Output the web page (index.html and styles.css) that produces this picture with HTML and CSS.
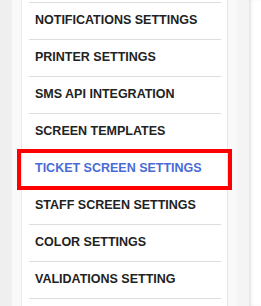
FILE: index.html
```html
<!DOCTYPE html>
<html>
<head>
<meta charset="utf-8">
<link rel="stylesheet" href="styles.css">
</head>
<body>
<div class="page">
  <div class="gutter"></div>
  <aside class="sidebar">
    <div class="card">
      <ul class="menu">
        <li class="item">NOTIFICATIONS SETTINGS</li>
        <li class="item">PRINTER SETTINGS</li>
        <li class="item">SMS API INTEGRATION</li>
        <li class="item">SCREEN TEMPLATES</li>
        <li class="item active">TICKET SCREEN SETTINGS<span class="highlight"></span></li>
        <li class="item">STAFF SCREEN SETTINGS</li>
        <li class="item">COLOR SETTINGS</li>
        <li class="item">VALIDATIONS SETTING</li>
      </ul>
    </div>
  </aside>
  <div class="spacer"></div>
  <main class="main"></main>
</div>
</body>
</html>
```

FILE: styles.css
```css
html, body {
  margin: 0;
  padding: 0;
  height: 100%;
  overflow: hidden;
}
body {
  font-family: "Liberation Sans", Arial, sans-serif;
  background: #efefef;
}
.page {
  display: flex;
  height: 306px;
}
.gutter {
  width: 12px;
  flex: none;
  background: #efefef;
}
.sidebar {
  flex: none;
  display: flex;
  background: #f9f9f9;
  padding-left: 9px;
  width: 216px;
}
.card {
  width: 207px;
  flex: none;
  background: #fff;
  border-left: 1px solid #e9e9e9;
  border-right: 1px solid #e6e6e6;
  padding: 2px 6px 0 7px;
  box-sizing: border-box;
}
.menu {
  list-style: none;
  margin: 0;
  padding: 0;
  border-top: 1px solid #dedede;
}
.item {
  position: relative;
  height: 37px;
  line-height: 34px;
  padding: 0 0 2px 6px;
  box-sizing: border-box;
  border-bottom: 1px solid #dedede;
  font-size: 12.5px;
  font-weight: bold;
  color: #222;
  white-space: nowrap;
}
.item.active {
  color: #4a6bd6;
}
.highlight {
  position: absolute;
  left: -12px;
  top: -2px;
  width: 215px;
  height: 41px;
  box-sizing: border-box;
  border: 4px solid #ff0000;
}
.spacer {
  width: 12px;
  flex: none;
  background: #f4f4f4;
}
.main {
  flex: 1;
  background: #fff;
  box-shadow: inset 3px 0 3px -1px #e4e4e4;
}
```
